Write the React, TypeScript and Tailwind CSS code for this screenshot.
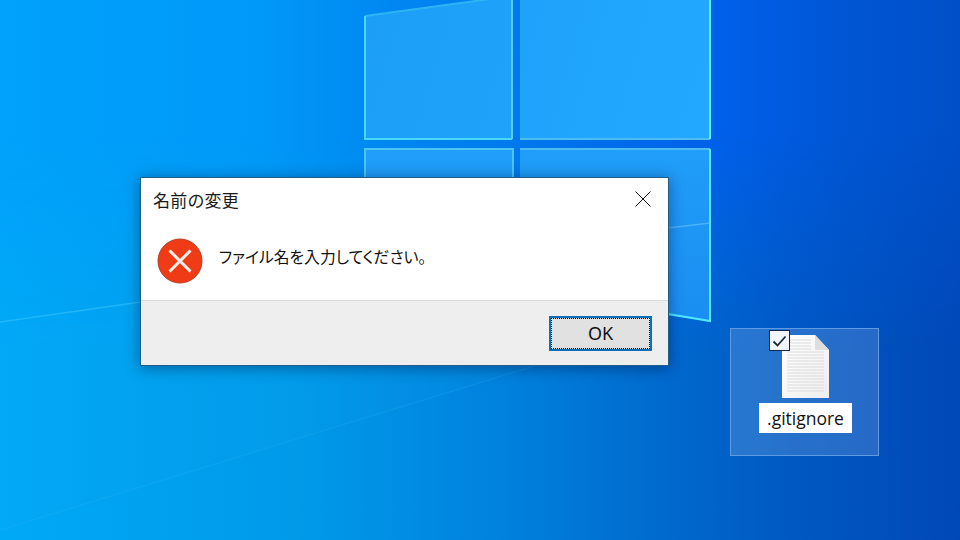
import React from 'react';

const jp = "font-['Noto_Sans_CJK_JP','Noto_Sans',sans-serif]";

const Wallpaper = () => (
  <svg className="absolute inset-0" width="960" height="540" viewBox="0 0 960 540">
    <defs>
      <linearGradient id="bgTop" x1="0" y1="0" x2="960" y2="0" gradientUnits="userSpaceOnUse">
        <stop offset="0" stopColor="#00a2fb" />
        <stop offset="0.27" stopColor="#0099f9" />
        <stop offset="0.38" stopColor="#008bf2" />
        <stop offset="0.75" stopColor="#0060ea" />
        <stop offset="0.88" stopColor="#0056d4" />
        <stop offset="1" stopColor="#004fc8" />
      </linearGradient>
      <linearGradient id="bgBottom" x1="0" y1="0" x2="960" y2="0" gradientUnits="userSpaceOnUse">
        <stop offset="0" stopColor="#00a9f6" />
        <stop offset="0.31" stopColor="#009ae9" />
        <stop offset="0.52" stopColor="#0082de" />
        <stop offset="0.69" stopColor="#006acf" />
        <stop offset="0.83" stopColor="#0058c2" />
        <stop offset="1" stopColor="#0048b8" />
      </linearGradient>
      <linearGradient id="fade" x1="0" y1="0" x2="0" y2="1">
        <stop offset="0.25" stopColor="#000000" />
        <stop offset="0.65" stopColor="#ffffff" />
      </linearGradient>
      <mask id="lower">
        <rect width="960" height="540" fill="url(#fade)" />
      </mask>
      <linearGradient id="paneUp" x1="365" y1="0" x2="710" y2="100" gradientUnits="userSpaceOnUse">
        <stop offset="0" stopColor="#1c9ef6" />
        <stop offset="1" stopColor="#22a9ff" />
      </linearGradient>
      <linearGradient id="paneDown" x1="0" y1="149" x2="0" y2="320" gradientUnits="userSpaceOnUse">
        <stop offset="0" stopColor="#209ef8" />
        <stop offset="1" stopColor="#1a8ef2" />
      </linearGradient>
    </defs>
    <rect width="960" height="540" fill="url(#bgTop)" />
    <rect width="960" height="540" fill="url(#bgBottom)" mask="url(#lower)" />
    {/* faint light beams */}
    <line x1="0" y1="322" x2="141" y2="302" stroke="#40c8ff" strokeOpacity="0.5" strokeWidth="1.5" />
    <polygon points="0,530 668,325 668,322 0,322" fill="#20b8ff" opacity="0.05" />
    <line x1="0" y1="530" x2="668" y2="325" stroke="#38b8fa" strokeOpacity="0.18" strokeWidth="1.5" />
    {/* window panes */}
    <polygon points="365,16 512,-4 512,139 365,139" fill="url(#paneUp)" />
    <polygon points="520,-6 710,-6 710,139 520,139" fill="url(#paneUp)" />
    <polygon points="365,149 512,149 512,320 365,300" fill="url(#paneDown)" />
    <polygon points="520,149 710,149 710,321 520,296" fill="url(#paneDown)" />
    <g fill="none" strokeWidth="2">
      <path d="M365 16L512 -4" stroke="#2eb4f2" />
      <path d="M365 16V139H512" stroke="#48d8f8" />
      <path d="M512 -4V139" stroke="#58cff8" />
      <path d="M520 139H710" stroke="#4cbcf2" />
      <path d="M710 -6V139" stroke="#58f0ff" />
      <path d="M365 300V149H513V300" stroke="#4cc4f4" />
      <path d="M520 149H710" stroke="#4cbcf2" />
      <path d="M668 314L710 321V149" stroke="#50e8ff" />
    </g>
    <line x1="668" y1="228" x2="710" y2="223" stroke="#6ccafa" strokeOpacity="0.55" strokeWidth="1.5" />
  </svg>
);

const ErrorIcon = () => (
  <svg width="46" height="46" viewBox="0 0 46 46" className="shrink-0">
    <circle cx="23" cy="23" r="22" fill="#f03c16" stroke="#b93a22" strokeWidth="1" />
    <path d="M12.5 12.5L33.5 33.5M33.5 12.5L12.5 33.5" stroke="#fdeee8" strokeWidth="3" fill="none" />
  </svg>
);

const ErrorDialog = () => (
  <div className={`absolute left-[140px] top-[177px] w-[529px] h-[189px] border border-[#1c5f8c] bg-white flex flex-col shadow-[0_2px_14px_rgba(0,0,30,0.4)] ${jp}`}>
    <div className="h-[44px] flex items-center justify-between pl-3 pr-[17px] shrink-0">
      <span className="text-[17px] tracking-[0.2px] text-[#1a1a1a]">名前の変更</span>
      <svg width="16" height="16" viewBox="0 0 16 16" className="-mt-[2px]">
        <path d="M0.5 0.5L15.5 15.5M15.5 0.5L0.5 15.5" stroke="#111111" strokeWidth="1" fill="none" />
      </svg>
    </div>
    <div className="h-[78px] shrink-0 flex items-center pl-4 gap-[16px]">
      <ErrorIcon />
      <span className="text-[15.8px] text-[#111111] [font-feature-settings:'palt'] -mt-[9px]">ファイル名を入力してください。</span>
    </div>
    <div className="flex-1 bg-[#eeeeee] border-t border-[#dcdcdc] flex items-center justify-end pr-4">
      <button className="w-[103px] h-[35px] border-2 border-[#0f70b7] bg-[#e1e1e1] flex items-center justify-center p-0">
        <span className="w-full h-full border border-dotted border-[#111111] flex items-center justify-center text-[18px] text-[#111111] font-['Noto_Sans',sans-serif]">OK</span>
      </button>
    </div>
  </div>
);

const FileIcon = () => (
  <svg width="50" height="66" viewBox="0 0 50 66">
    <defs>
      <linearGradient id="paper" x1="0" y1="0" x2="1" y2="1">
        <stop offset="0" stopColor="#ffffff" />
        <stop offset="1" stopColor="#eeeeee" />
      </linearGradient>
    </defs>
    <path d="M1 1H34L48 16V64H1Z" fill="url(#paper)" />
    <path d="M34 1L48 16H34Z" fill="#dedede" />
    <path
      d="M6 6H30M6 9H30M6 12H30M6 15H30M6 18H43M6 21H43M6 24H43M6 27H43M6 30H43M6 33H43M6 36H43M6 39H43M6 42H43M6 45H43M6 48H43M6 51H43M6 54H43M6 57H43"
      stroke="#dcdcdc"
      strokeWidth="1"
      fill="none"
    />
  </svg>
);

const DesktopFile = () => (
  <div className="absolute left-[730px] top-[328px] w-[149px] h-[128px] border border-[#5f9ae4] bg-white/15 flex flex-col items-center">
    <div className="mt-[5px] ml-[2px] h-[66px]">
      <FileIcon />
    </div>
    <div className="mt-[3px] ml-[2px] bg-white px-2 h-[30px] w-[93px] flex items-center justify-center text-[17.5px] text-[#111111] font-['Open_Sans',sans-serif]">
      .gitignore
    </div>
    <div className="absolute left-[38px] top-[1px] w-[21px] h-[21px] border border-[#0d2a4d] bg-[#f2f6fb] flex items-center justify-center">
      <svg width="15" height="12" viewBox="0 0 15 12">
        <path d="M1.5 6.5L5.5 10.5L13.5 1.5" stroke="#1a2a3a" strokeWidth="1.8" fill="none" />
      </svg>
    </div>
  </div>
);

export default function App() {
  return (
    <div className="relative w-[960px] h-[540px] overflow-hidden">
      <Wallpaper />
      <ErrorDialog />
      <DesktopFile />
    </div>
  );
}
